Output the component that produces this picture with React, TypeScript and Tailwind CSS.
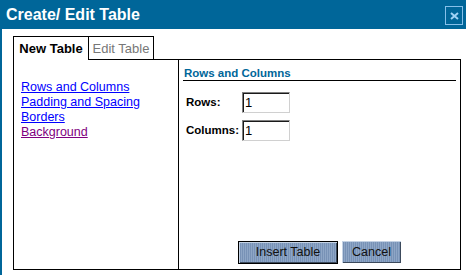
import React from "react";

const btnBg =
  "bg-[repeating-linear-gradient(90deg,#8ea6c6_0px,#8ea6c6_1px,#7892b6_1px,#7892b6_2px)]";

export default function App() {
  return (
    <div
      className="w-[466px] h-[275px] bg-white flex flex-col overflow-hidden"
      style={{ fontFamily: '"Liberation Sans", Arial, sans-serif' }}
    >
      {/* Title bar */}
      <div className="h-[29px] bg-[#006699] flex items-center justify-between pl-[6px] pr-[3px] shrink-0">
        <span className="text-white font-bold text-[16px] leading-none tracking-[0px]">
          Create/ Edit Table
        </span>
        <div className="w-[18px] h-[19px] border border-[#86c0ea] flex items-center justify-center mt-[2px]">
          <svg width="9" height="8" viewBox="0 0 9 8">
            <path
              d="M1 1 L8 7 M8 1 L1 7"
              stroke="#9fd2f5"
              strokeWidth="2"
              fill="none"
            />
          </svg>
        </div>
      </div>

      {/* Body */}
      <div className="flex-1 border-l-2 border-[#006699] pl-[11px] pt-[7px]">
        <div className="w-[448px] flex flex-col">
          {/* Tabs */}
          <div className="flex h-[24px]">
            <div className="w-[76px] border-l border-t border-r border-black flex items-center justify-center text-[13px] font-bold text-black leading-none pb-[1px]">
              New Table
            </div>
            <div className="w-[65px] border-t border-r border-b border-black flex items-center justify-center text-[13px] text-[#777777] leading-none">
              Edit Table
            </div>
            <div className="flex-1 border-b border-black" />
          </div>

          {/* Panel */}
          <div className="h-[210px] border-l border-r border-b border-black flex">
            <div className="w-[165px] border-r border-black pl-[7px] pt-[20px] flex flex-col text-[12.5px] leading-[15px]">
              <a href="#" className="text-[#0000ff] underline">Rows and Columns</a>
              <a href="#" className="text-[#0000ff] underline">Padding and Spacing</a>
              <a href="#" className="text-[#0000ff] underline">Borders</a>
              <a href="#" className="text-[#800080] underline">Background</a>
            </div>
            <div className="flex-1 flex flex-col pb-[5px]">
              <div className="mx-[4px] mt-[6px] border-b border-black pl-[1px] text-[11.5px] leading-[14px] font-bold text-[#006699]">
                Rows and Columns
              </div>
              <div className="pl-[7px] mt-[11px] grid grid-cols-[56px_48px] gap-y-[7px] items-center">
                <span className="text-[11.5px] font-bold text-black">Rows:</span>
                <div className="h-[21px] border border-t-[#808080] border-l-[#808080] border-b-[#d0d0d0] border-r-[#d0d0d0] shadow-[inset_1px_1px_0_#1a1a1a] flex items-center pl-[2px] text-[13px] text-black bg-white">
                  1
                </div>
                <span className="text-[11.5px] font-bold text-black">Columns:</span>
                <div className="h-[21px] border border-t-[#808080] border-l-[#808080] border-b-[#d0d0d0] border-r-[#d0d0d0] shadow-[inset_1px_1px_0_#1a1a1a] flex items-center pl-[2px] text-[13px] text-black bg-white">
                  1
                </div>
              </div>
              <div className="mt-auto flex justify-center gap-[4px] items-start">
                <button
                  className={`w-[100px] h-[23px] border border-black ${btnBg} shadow-[inset_1px_1px_0_#c4d2e4,inset_-1px_-1px_0_#3c4a5c] text-[12.5px] text-[#111111] leading-none`}
                >
                  Insert Table
                </button>
                <button
                  className={`w-[59px] h-[22px] ${btnBg} shadow-[inset_1px_1px_0_#c4d2e4,inset_-1px_-1px_0_#3c4a5c] text-[12.5px] text-[#111111] leading-none`}
                >
                  Cancel
                </button>
              </div>
            </div>
          </div>
        </div>
      </div>
    </div>
  );
}
